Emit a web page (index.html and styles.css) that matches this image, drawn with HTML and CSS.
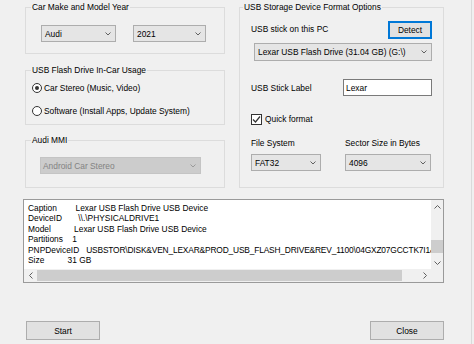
FILE: index.html
```html
<!DOCTYPE html>
<html lang="en">
<head>
    <meta charset="UTF-8">
    <title>USB Stick Formatter</title>
    <link rel="stylesheet" href="styles.css">
</head>
<body>
    <div class="window">
        <div class="top">
            <div class="col-left">
                <!-- Car make and year -->
                <fieldset class="group">
                    <legend>Car Make and Model Year</legend>
                    <div class="make-row">
                        <div class="combo combo-make"><span>Audi</span><svg class="chev" width="6" height="4" viewBox="0 0 6 4"><polyline points="0.5,0.5 3,3 5.5,0.5"/></svg></div>
                        <div class="combo combo-year"><span>2021</span><svg class="chev" width="6" height="4" viewBox="0 0 6 4"><polyline points="0.5,0.5 3,3 5.5,0.5"/></svg></div>
                    </div>
                </fieldset>

                <!-- Usage -->
                <fieldset class="group usage">
                    <legend>USB Flash Drive In-Car Usage</legend>
                    <div class="options">
                        <div class="radio"><span class="radio-dot on"></span>Car Stereo (Music, Video)</div>
                        <div class="radio"><span class="radio-dot"></span>Software (Install Apps, Update System)</div>
                    </div>
                </fieldset>

                <!-- MMI -->
                <fieldset class="group mmi">
                    <legend>Audi MMI</legend>
                    <div class="mmi-body">
                        <div class="combo combo-mmi disabled"><span>Android Car Stereo</span><svg class="chev" width="6" height="4" viewBox="0 0 6 4"><polyline points="0.5,0.5 3,3 5.5,0.5"/></svg></div>
                    </div>
                </fieldset>
            </div>

            <!-- Format options -->
            <fieldset class="group format">
                <legend>USB Storage Device Format Options</legend>
                <div class="format-body">
                    <div class="row-detect">
                        <span class="detect-label">USB stick on this PC</span>
                        <div class="btn detect">Detect</div>
                    </div>
                    <div class="combo drive"><span>Lexar USB Flash Drive (31.04 GB) (G:\)</span><svg class="chev" width="6" height="4" viewBox="0 0 6 4"><polyline points="0.5,0.5 3,3 5.5,0.5"/></svg></div>
                    <div class="row-label">
                        <span>USB Stick Label</span>
                        <div class="textbox">Lexar</div>
                    </div>
                    <div class="check-row">
                        <span class="checkbox"><svg width="9" height="9" viewBox="0 0 9 9"><polyline points="1,4.5 3.5,7 8,1.5"/></svg></span>
                        <span>Quick format</span>
                    </div>
                    <div class="fs-grid">
                        <span>File System</span>
                        <span>Sector Size in Bytes</span>
                        <div class="combo combo-fs"><span>FAT32</span><svg class="chev" width="6" height="4" viewBox="0 0 6 4"><polyline points="0.5,0.5 3,3 5.5,0.5"/></svg></div>
                        <div class="combo combo-sector"><span>4096</span><svg class="chev" width="6" height="4" viewBox="0 0 6 4"><polyline points="0.5,0.5 3,3 5.5,0.5"/></svg></div>
                    </div>
                </div>
            </fieldset>
        </div>

        <!-- Device info -->
        <div class="info">
            <div class="info-text">
                <div class="info-row"><span class="key">Caption        </span><span>Lexar USB Flash Drive USB Device</span></div>
                <div class="info-row"><span class="key">DeviceID       </span><span>\\.\PHYSICALDRIVE1</span></div>
                <div class="info-row"><span class="key">Model          </span><span>Lexar USB Flash Drive USB Device</span></div>
                <div class="info-row"><span class="key">Partitions    </span><span>1</span></div>
                <div class="info-row"><span class="key">PNPDeviceID   </span><span class="pnp">USBSTOR\DISK&amp;VEN_LEXAR&amp;PROD_USB_FLASH_DRIVE&amp;REV_1100\04GXZ07GCCTK7I1&amp;0</span></div>
                <div class="info-row"><span class="key">Size          </span><span>31 GB</span></div>
            </div>
            <div class="vscroll">
                <div class="arrow"><svg width="7" height="4" viewBox="0 0 7 4"><polyline points="0.5,3.5 3.5,0.5 6.5,3.5"/></svg></div>
                <div class="vtrack"><div class="vthumb"></div></div>
                <div class="arrow"><svg width="7" height="4" viewBox="0 0 7 4"><polyline points="0.5,0.5 3.5,3.5 6.5,0.5"/></svg></div>
            </div>
            <div class="hscroll">
                <div class="arrow"><svg width="4" height="7" viewBox="0 0 4 7"><polyline points="3.5,0.5 0.5,3.5 3.5,6.5"/></svg></div>
                <div class="htrack"><div class="hthumb"></div></div>
                <div class="arrow"><svg width="4" height="7" viewBox="0 0 4 7"><polyline points="0.5,0.5 3.5,3.5 0.5,6.5"/></svg></div>
            </div>
            <div class="corner"></div>
        </div>

        <div class="actions">
            <div class="btn action">Start</div>
            <div class="btn action">Close</div>
        </div>
    </div>
</body>
</html>
```

FILE: styles.css
```css
* {
    box-sizing: border-box;
}

body {
    margin: 0;
    background-color: #f0f0f0;
    font-family: "Liberation Sans", Arial, sans-serif;
    font-size: 8.4px;
    color: #000;
}

.window {
    width: 472px;
    height: 344px;
    padding-top: 1px;
    border-right: 1px solid #dadada;
    overflow: hidden;
}

.top {
    display: flex;
    align-items: flex-start;
    gap: 14px;
    padding-left: 25px;
}

.col-left {
    width: 200px;
    display: flex;
    flex-direction: column;
}

/* group boxes */
.group {
    margin: 0;
    padding: 0;
    min-width: 0;
    border: 1px solid #dcdcdc;
}

.group legend {
    margin-left: 5px;
    padding: 0 1px;
    line-height: 12px;
}

.make-row {
    display: flex;
    gap: 17px;
    padding: 12px 0 11px 15px;
}

.combo {
    display: flex;
    align-items: center;
    justify-content: space-between;
    height: 17px;
    padding: 0 4px 0 3px;
    background-color: #e5e5e5;
    border: 1px solid #adadad;
    white-space: nowrap;
}

.chev polyline {
    fill: none;
    stroke: #606060;
    stroke-width: 1;
}

.combo-make {
    width: 75px;
}

.combo-year {
    width: 73px;
}

.usage {
    margin-top: 10px;
}

.options {
    display: flex;
    flex-direction: column;
    gap: 11px;
    padding: 6px 0 7px 6px;
}

.radio {
    display: flex;
    align-items: center;
    gap: 2px;
    line-height: 12px;
}

.radio-dot {
    width: 10px;
    height: 10px;
    border: 1px solid #333;
    border-radius: 50%;
    background-color: #fff;
    display: flex;
    align-items: center;
    justify-content: center;
}

.radio-dot.on::after {
    content: "";
    width: 4px;
    height: 4px;
    border-radius: 50%;
    background-color: #333;
}

.mmi {
    margin-top: 9px;
}

.mmi-body {
    padding: 11px 0 13px 14px;
}

.combo-mmi {
    width: 161px;
}

.combo.disabled {
    padding-left: 2px;
    background-color: #cccccc;
    border-color: #c4c4c4;
    color: #838383;
}

.combo.disabled .chev polyline {
    stroke: #9a9a9a;
}

/* format options */
.format {
    width: 205px;
}

.format legend {
    margin-left: 3px;
}

.format-body {
    padding: 8px 11px 16px 11px;
}

.row-detect {
    display: flex;
    justify-content: space-between;
    align-items: flex-start;
}

.detect-label {
    padding-top: 2px;
    line-height: 12px;
}

.btn {
    display: flex;
    align-items: center;
    justify-content: center;
    height: 18px;
    background-color: #e1e1e1;
    border: 1px solid #adadad;
}

.detect {
    width: 44px;
    border: 2px solid #0078d7;
}

.drive {
    height: 18px;
    margin: 4px 0 0 3px;
}

.row-label {
    display: flex;
    justify-content: space-between;
    align-items: center;
    margin-top: 18px;
}

.textbox {
    display: flex;
    align-items: center;
    width: 89px;
    height: 17px;
    padding-left: 2px;
    background-color: #fff;
    border: 1px solid #7a7a7a;
}

.check-row {
    display: flex;
    align-items: center;
    gap: 3px;
    margin-top: 17px;
    line-height: 12px;
}

.checkbox {
    display: flex;
    align-items: center;
    justify-content: center;
    width: 11px;
    height: 11px;
    border: 1px solid #333;
    background-color: #fff;
}

.checkbox polyline {
    fill: none;
    stroke: #333;
    stroke-width: 1.2;
}

.fs-grid {
    display: grid;
    grid-template-columns: 94px 86px;
    row-gap: 5px;
    margin-top: 12px;
    line-height: 12px;
}

.combo-fs {
    width: 70px;
}

.combo-sector {
    width: 86px;
}

/* device info box */
.info {
    display: grid;
    grid-template-columns: 1fr 12px;
    grid-template-rows: 1fr 13px;
    width: 421px;
    height: 84px;
    margin: 11px 0 0 23px;
    background-color: #fff;
    border: 1px solid #9a9a9a;
}

.info-text {
    padding: 3px 0 0 4px;
    line-height: 10.4px;
    overflow: hidden;
}

.info-row {
    white-space: pre;
}

.pnp {
    letter-spacing: -0.17px;
}

.arrow {
    display: flex;
    align-items: center;
    justify-content: center;
    flex: none;
}

.arrow polyline {
    fill: none;
    stroke: #606060;
    stroke-width: 1;
}

.vscroll {
    display: flex;
    flex-direction: column;
    background-color: #f0f0f0;
}

.vscroll .arrow {
    height: 13px;
}

.vtrack {
    flex: 1;
    padding-top: 27px;
}

.vthumb {
    height: 13px;
    background-color: #cdcdcd;
}

.hscroll {
    display: flex;
    background-color: #f0f0f0;
}

.hscroll .arrow {
    width: 13px;
}

.htrack {
    flex: 1;
    padding: 1px 0;
}

.hthumb {
    width: 365px;
    height: 100%;
    background-color: #cdcdcd;
}

.corner {
    background-color: #f0f0f0;
}

.actions {
    display: flex;
    justify-content: space-between;
    width: 418px;
    margin: 38px 0 0 26px;
}

.action {
    width: 74px;
    height: 19px;
}
```
